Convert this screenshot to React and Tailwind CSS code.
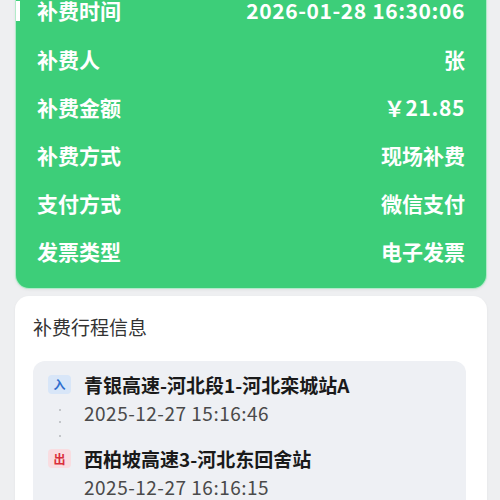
import React from "react";

const rows = [
  ["补费时间", "2026-01-28 16:30:06", true],
  ["补费人", "张", false],
  ["补费金额", "￥21.85", true],
  ["补费方式", "现场补费", false],
  ["支付方式", "微信支付", false],
  ["发票类型", "电子发票", false],
];

export default function App() {
  return (
    <div
      className="w-[500px] h-[500px] overflow-hidden bg-[#eeeff1] pl-[15px] pr-[13px]"
      style={{ fontFamily: '"Noto Sans CJK SC", "Noto Sans", sans-serif' }}
    >
      <div className="relative -mt-[22px] pt-[8px] pb-[12px] rounded-b-[14px] bg-[#3dce79] border border-white/60 px-[21px] shadow-[0_1px_3px_rgba(0,0,0,0.06)]">
        <div className="absolute left-0 top-[22px] w-[4px] h-[20px] bg-white" />
        {rows.map(([k, v, num]) => (
          <div key={k} className="flex h-[48.2px] items-center justify-between text-white font-bold text-[21px]">
            <span>{k}</span>
            <span className={num ? "tracking-[0.6px]" : ""}>{v}</span>
          </div>
        ))}
      </div>
      <div className="mt-[7px] rounded-[14px] bg-white pt-[18px] px-[18px] pr-[21px] h-[300px] shadow-[0_1px_3px_rgba(0,0,0,0.05)]">
        <div className="text-[19px] leading-[26px] text-[#333333]">补费行程信息</div>
        <div className="mt-[21px] rounded-[12px] bg-[#eef0f4] pt-[10px] pl-[15px] pr-[14px] pb-[20px]">
          <div className="flex items-start gap-[13px]">
            <div className="flex flex-col items-center w-[23px] shrink-0">
              <div className="mt-[4px] h-[19px] w-[23px] rounded-[4px] bg-[#d8e6f8] text-[#2f6fcf] text-[12px] leading-[19px] text-center font-bold">入</div>
              <div className="mt-[15px] w-[2px] h-[2px] rounded-full bg-[#b5b8bd]" />
              <div className="mt-[10px] w-[2px] h-[2px] rounded-full bg-[#b5b8bd]" />
              <div className="mt-[12px] w-[2px] h-[2px] rounded-full bg-[#b5b8bd]" />
            </div>
            <div className="flex flex-col">
              <div className="text-[19px] leading-[28px] font-bold text-[#1a1a1a]">青银高速-河北段1-河北栾城站A</div>
              <div className="text-[19px] leading-[28px] tracking-[0.5px] text-[#4a4a4a]">2025-12-27 15:16:46</div>
            </div>
          </div>
          <div className="mt-[8px] flex items-start gap-[13px]">
            <div className="flex flex-col items-center w-[23px] shrink-0">
              <div className="mt-[4px] h-[19px] w-[23px] rounded-[4px] bg-[#f9dde1] text-[#d92f3c] text-[12px] leading-[19px] text-center font-bold">出</div>
            </div>
            <div className="flex flex-col">
              <div className="text-[19px] leading-[28px] font-bold text-[#1a1a1a]">西柏坡高速3-河北东回舍站</div>
              <div className="text-[19px] leading-[28px] tracking-[0.5px] text-[#4a4a4a]">2025-12-27 16:16:15</div>
            </div>
          </div>
        </div>
      </div>
    </div>
  );
}
